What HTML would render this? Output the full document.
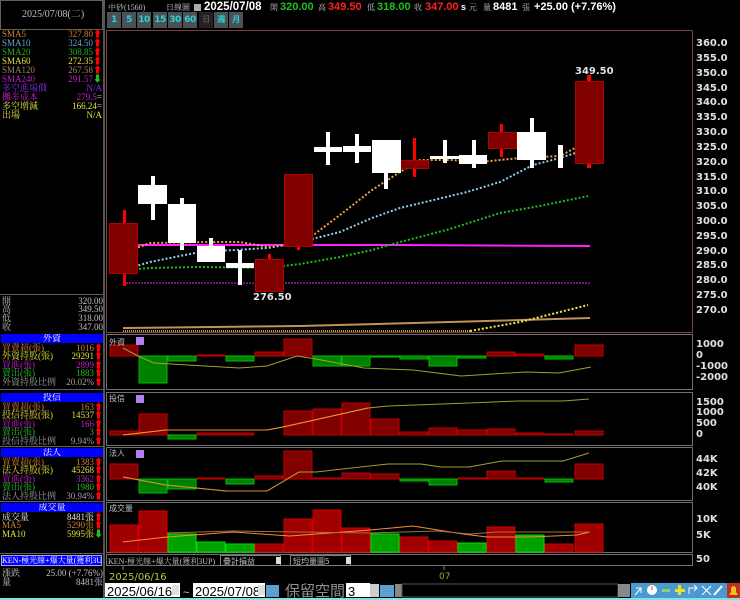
<!DOCTYPE html>
<html><head><meta charset="utf-8">
<style>
html,body{margin:0;padding:0;background:#000;width:740px;height:600px;overflow:hidden;position:relative;font-family:"Liberation Sans","Noto Sans CJK TC",sans-serif;}
.t{position:absolute;white-space:nowrap;font-size:9px;line-height:9px;font-family:"Liberation Serif","Noto Serif CJK SC",serif;}
.r{position:absolute;white-space:nowrap;font-size:9px;line-height:9px;text-align:right;font-family:"Liberation Serif","Noto Serif CJK SC",serif;}
.hd{position:absolute;left:1px;width:102px;height:9px;background:#0000ff;color:#fff;font-size:9px;line-height:9px;text-align:center;font-family:"Liberation Serif","Noto Serif CJK SC",serif;white-space:nowrap;overflow:hidden;}
.ax{position:absolute;left:696px;font:bold 10px "DejaVu Sans",sans-serif;color:#e0e0e0;line-height:10px;}
.btn{position:absolute;top:12px;height:16px;width:14px;background:#4a5258;color:#30d0d0;font:bold 9px "DejaVu Sans",sans-serif;line-height:16px;text-align:center;letter-spacing:-0.5px;overflow:hidden;}
.ar{color:#ff0000;}
.tb{position:absolute;top:1px;white-space:nowrap;font:bold 11px "Liberation Sans",sans-serif;line-height:12px;}
.tl{position:absolute;top:2px;white-space:nowrap;font-size:8px;line-height:11px;color:#c0c0c0;font-family:"Liberation Serif","Noto Serif CJK SC",serif;}
</style></head><body>
<div style="position:absolute;left:0;top:0;width:103px;height:30px;border:1px solid #606060;box-sizing:border-box;"></div>
<div class="t" style="left:22px;top:10px;color:#c0c0c0;font-size:10px;">2025/07/08(二)</div>
<div style="position:absolute;left:103px;top:0;width:2px;height:600px;background:#555;"></div>

<div class="t" style="left:2px;top:30px;color:#d08030">SMA5</div><div class="r" style="right:638px;top:30px;color:#d08030">327.80<span class="ar">⬆</span></div>
<div class="t" style="left:2px;top:39px;color:#60a8d8">SMA10</div><div class="r" style="right:638px;top:39px;color:#60a8d8">324.50<span class="ar">⬆</span></div>
<div class="t" style="left:2px;top:48px;color:#20b020">SMA20</div><div class="r" style="right:638px;top:48px;color:#20b020">308.85<span class="ar">⬆</span></div>
<div class="t" style="left:2px;top:57px;color:#e0e040">SMA60</div><div class="r" style="right:638px;top:57px;color:#e0e040">272.35<span class="ar">⬆</span></div>
<div class="t" style="left:2px;top:66px;color:#a08060">SMA120</div><div class="r" style="right:638px;top:66px;color:#a08060">267.58<span class="ar">⬆</span></div>
<div class="t" style="left:2px;top:75px;color:#c020c0">SMA240</div><div class="r" style="right:638px;top:75px;color:#c020c0">291.57<span style="color:#20c020">⬇</span></div>
<div class="t" style="left:2px;top:84px;color:#8030e0">多空進場價</div><div class="r" style="right:638px;top:84px;color:#8030e0">N/A</div>
<div class="t" style="left:2px;top:93px;color:#c020c0">攤多成本</div><div class="r" style="right:638px;top:93px;color:#c020c0">279.5<span style="color:#ccc">=</span></div>
<div class="t" style="left:2px;top:102px;color:#e0e040">多空增減</div><div class="r" style="right:638px;top:102px;color:#e0e040">166.24<span style="color:#ccc">=</span></div>
<div class="t" style="left:2px;top:111px;color:#e0e040">出場</div><div class="r" style="right:638px;top:111px;color:#e0e040">N/A</div>

<div style="position:absolute;left:0;top:294px;width:103px;height:1px;background:#606060"></div>
<div class="t" style="left:2px;top:297px;color:#c0c0c0">開</div><div class="r" style="right:637px;top:297px;color:#c0c0c0">320.00</div>
<div class="t" style="left:2px;top:305px;color:#c0c0c0">高</div><div class="r" style="right:637px;top:305px;color:#c0c0c0">349.50</div>
<div class="t" style="left:2px;top:314px;color:#c0c0c0">低</div><div class="r" style="right:637px;top:314px;color:#c0c0c0">318.00</div>
<div class="t" style="left:2px;top:323px;color:#c0c0c0">收</div><div class="r" style="right:637px;top:323px;color:#c0c0c0">347.00</div>

<div class="hd" style="top:334px">外資</div>
<div class="t" style="left:2px;top:344px;color:#d08030">買賣超(張)</div><div class="r" style="right:637px;top:344px;color:#d08030">1016<span class="ar">⬆</span></div>
<div class="t" style="left:2px;top:352px;color:#e0e040">外資持股(張)</div><div class="r" style="right:637px;top:352px;color:#e0e040">29291<span class="ar">⬆</span></div>
<div class="t" style="left:2px;top:361px;color:#c020c0">買進(張)</div><div class="r" style="right:637px;top:361px;color:#c020c0">2899<span class="ar">⬆</span></div>
<div class="t" style="left:2px;top:369px;color:#20c020">賣出(張)</div><div class="r" style="right:637px;top:369px;color:#20c020">1883<span class="ar">⬆</span></div>
<div class="t" style="left:2px;top:378px;color:#a0a0a0">外資持股比例</div><div class="r" style="right:637px;top:378px;color:#a0a0a0">20.02%<span class="ar">⬆</span></div>
<div style="position:absolute;left:0;top:389px;width:103px;height:1px;background:#606060"></div>

<div class="hd" style="top:393px">投信</div>
<div class="t" style="left:2px;top:403px;color:#d08030">買賣超(張)</div><div class="r" style="right:637px;top:403px;color:#d08030">163<span class="ar">⬆</span></div>
<div class="t" style="left:2px;top:411px;color:#e0e040">投信持股(張)</div><div class="r" style="right:637px;top:411px;color:#e0e040">14537<span class="ar">⬆</span></div>
<div class="t" style="left:2px;top:420px;color:#c020c0">買進(張)</div><div class="r" style="right:637px;top:420px;color:#c020c0">166<span class="ar">⬆</span></div>
<div class="t" style="left:2px;top:428px;color:#20c020">賣出(張)</div><div class="r" style="right:637px;top:428px;color:#20c020">3<span class="ar">⬆</span></div>
<div class="t" style="left:2px;top:437px;color:#a0a0a0">投信持股比例</div><div class="r" style="right:637px;top:437px;color:#a0a0a0">9.94%<span class="ar">⬆</span></div>
<div style="position:absolute;left:0;top:446px;width:103px;height:1px;background:#606060"></div>

<div class="hd" style="top:448px">法人</div>
<div class="t" style="left:2px;top:458px;color:#d08030">買賣超(張)</div><div class="r" style="right:637px;top:458px;color:#d08030">1383<span class="ar">⬆</span></div>
<div class="t" style="left:2px;top:466px;color:#e0e040">法人持股(張)</div><div class="r" style="right:637px;top:466px;color:#e0e040">45268<span class="ar">⬆</span></div>
<div class="t" style="left:2px;top:475px;color:#c020c0">買進(張)</div><div class="r" style="right:637px;top:475px;color:#c020c0">3362<span class="ar">⬆</span></div>
<div class="t" style="left:2px;top:483px;color:#20c020">賣出(張)</div><div class="r" style="right:637px;top:483px;color:#20c020">1980<span class="ar">⬆</span></div>
<div class="t" style="left:2px;top:492px;color:#a0a0a0">法人持股比例</div><div class="r" style="right:637px;top:492px;color:#a0a0a0">30.94%<span class="ar">⬆</span></div>
<div style="position:absolute;left:0;top:501px;width:103px;height:1px;background:#606060"></div>

<div class="hd" style="top:503px">成交量</div>
<div class="t" style="left:2px;top:513px;color:#e0e0e0">成交量</div><div class="r" style="right:637px;top:513px;color:#e0e0e0">8481張<span class="ar">⬆</span></div>
<div class="t" style="left:2px;top:521px;color:#d08030">MA5</div><div class="r" style="right:637px;top:521px;color:#d08030">5290張<span class="ar">⬆</span></div>
<div class="t" style="left:2px;top:530px;color:#e0e040">MA10</div><div class="r" style="right:637px;top:530px;color:#e0e040">5995張<span style="color:#20c020">⬇</span></div>
<div style="position:absolute;left:0;top:553px;width:103px;height:1px;background:#606060"></div>
<div class="hd" style="top:555px;text-align:left;width:101px;border:1px solid #a0a0ff;box-sizing:border-box;height:11px;font-size:8px;line-height:9px;">KEN-極光線+爆大量(獲利3UP)</div>
<div class="t" style="left:2px;top:569px;color:#c0c0c0">漲跌</div><div class="r" style="right:637px;top:569px;color:#c0c0c0">25.00 (+7.76%)</div>
<div class="t" style="left:2px;top:578px;color:#c0c0c0">量</div><div class="r" style="right:637px;top:578px;color:#c0c0c0">8481張</div>

<!-- top bar -->
<div class="tl" style="left:108px">中砂(1560)</div>
<div class="tl" style="left:166px">日線圖</div>
<div style="position:absolute;left:194px;top:4px;width:7px;height:7px;background:#aaa"></div>
<div class="tb" style="left:204px;color:#fff;font-size:11.5px">2025/07/08</div>
<div class="tl" style="left:270px">開</div><div class="tb" style="left:280px;color:#20c020">320.00</div>
<div class="tl" style="left:318px">高</div><div class="tb" style="left:328px;color:#ff2020">349.50</div>
<div class="tl" style="left:367px">低</div><div class="tb" style="left:377px;color:#20c020">318.00</div>
<div class="tl" style="left:414px">收</div><div class="tb" style="left:425px;color:#ff2020">347.00</div>
<div class="tb" style="left:461px;color:#fff;font-size:9px">s</div><div class="tl" style="left:469px">元</div>
<div class="tl" style="left:483px">量</div><div class="tb" style="left:493px;color:#fff">8481</div>
<div class="tl" style="left:522px">張</div>
<div class="tb" style="left:534px;color:#fff">+25.00 (+7.76%)</div>

<div class="btn" style="left:107px">1</div><div class="btn" style="left:122px">5</div><div class="btn" style="left:137px">10</div><div class="btn" style="left:153px">15</div><div class="btn" style="left:168px">30</div><div class="btn" style="left:183px">60</div>
<div class="btn" style="left:199px;background:#222;color:#555;font-size:8px">日</div><div class="btn" style="left:214px;font-size:8px">週</div><div class="btn" style="left:229px;font-size:8px">月</div>

<!-- axis labels -->
<div class="ax" style="top:39px">360.0</div><div class="ax" style="top:54px">355.0</div><div class="ax" style="top:69px">350.0</div><div class="ax" style="top:84px">345.0</div><div class="ax" style="top:98px">340.0</div><div class="ax" style="top:113px">335.0</div><div class="ax" style="top:128px">330.0</div><div class="ax" style="top:143px">325.0</div><div class="ax" style="top:158px">320.0</div><div class="ax" style="top:173px">315.0</div><div class="ax" style="top:187px">310.0</div><div class="ax" style="top:202px">305.0</div><div class="ax" style="top:217px">300.0</div><div class="ax" style="top:232px">295.0</div><div class="ax" style="top:247px">290.0</div><div class="ax" style="top:261px">285.0</div><div class="ax" style="top:276px">280.0</div><div class="ax" style="top:291px">275.0</div><div class="ax" style="top:306px">270.0</div>
<div class="ax" style="top:340px">1000</div><div class="ax" style="top:351px">0</div><div class="ax" style="top:362px">-1000</div><div class="ax" style="top:373px">-2000</div>
<div class="ax" style="top:398px">1500</div><div class="ax" style="top:408px">1000</div><div class="ax" style="top:419px">500</div><div class="ax" style="top:430px">0</div>
<div class="ax" style="top:455px">44K</div><div class="ax" style="top:469px">42K</div><div class="ax" style="top:483px">40K</div>
<div class="ax" style="top:515px">10K</div><div class="ax" style="top:531px">5K</div><div class="ax" style="top:555px">50</div>

<svg width="740" height="600" style="position:absolute;left:0;top:0" xmlns="http://www.w3.org/2000/svg">
<g fill="none" stroke-width="1">
<rect x="106.5" y="30.5" width="586" height="302" stroke="#804040"/>
<rect x="106.5" y="334.5" width="586" height="55" stroke="#707070"/>
<rect x="106.5" y="392.5" width="586" height="53" stroke="#707070"/>
<rect x="106.5" y="447.5" width="586" height="53" stroke="#707070"/>
<rect x="106.5" y="502.5" width="586" height="50" stroke="#707070"/>
<rect x="106.5" y="554.5" width="586" height="11" stroke="#707070"/>
</g>
<polyline points="123,328 300,326 450,322 590,318" stroke="#c09060" stroke-width="2" fill="none"/>
<line x1="123" y1="331" x2="470" y2="331" stroke="#c0a040" stroke-width="2" stroke-dasharray="1,1"/>
<polyline points="470,331 520,322 588,305" stroke="#f0f040" stroke-width="2" stroke-dasharray="2,2" fill="none"/>
<line x1="123" y1="283" x2="590" y2="283" stroke="#9020a0" stroke-width="1.5" stroke-dasharray="2,1"/>
<polyline points="123,245 400,245 590,246" stroke="#ff20ff" stroke-width="2" fill="none"/>
<polyline points="123,270 150,268 200,267 268,268 300,264 340,257 372,250 400,242 450,229 500,213 540,206 588,196" stroke="#20c020" stroke-width="2" stroke-dasharray="2,2" fill="none"/>
<polyline points="123,270 150,262 200,252 268,248 300,242 340,232 372,218 400,208 467,192 500,182 533,165 560,158 588,149" stroke="#90d0f0" stroke-width="2" stroke-dasharray="2,2" fill="none"/>
<polyline points="123,253 150,243 210,242 240,242 268,247 290,245 312,236 340,215 372,190 400,172 420,160 450,160 480,162 520,158 560,156 575,148 590,140" stroke="#f0a040" stroke-width="2" stroke-dasharray="2,2" fill="none"/>
<g fill="#ff0000">
<rect x="123" y="210" width="3" height="76"/><rect x="268" y="254" width="3" height="38"/><rect x="297" y="240" width="3" height="10"/>
<rect x="413" y="138" width="3" height="39"/><rect x="500" y="124" width="3" height="33"/><rect x="587" y="75" width="4" height="93"/>
</g>
<g fill="#800000" stroke="#b00000">
<rect x="109.5" y="223.5" width="28" height="50"/>
<rect x="255.5" y="259.5" width="28" height="32"/>
<rect x="284.5" y="174.5" width="28" height="72"/>
<rect x="400.5" y="160.5" width="28" height="8"/>
<rect x="488.5" y="132.5" width="28" height="16"/>
<rect x="575.5" y="81.5" width="28" height="82"/>
</g>
<g fill="#ffffff">
<rect x="151" y="176" width="4" height="44"/><rect x="138" y="185" width="29" height="19"/>
<rect x="180" y="198" width="4" height="52"/><rect x="168" y="204" width="28" height="39"/>
<rect x="209" y="238" width="4" height="10"/><rect x="197" y="246" width="28" height="16"/>
<rect x="238" y="250" width="4" height="35"/><rect x="226" y="263" width="28" height="5"/>
<rect x="326" y="132" width="4" height="33"/><rect x="314" y="147" width="28" height="5"/>
<rect x="355" y="134" width="4" height="29"/><rect x="343" y="146" width="28" height="6"/>
<rect x="384" y="150" width="4" height="39"/><rect x="372" y="140" width="29" height="33"/>
<rect x="443" y="140" width="4" height="23"/><rect x="430" y="156" width="29" height="3"/>
<rect x="472" y="140" width="4" height="28"/><rect x="459" y="155" width="28" height="9"/>
<rect x="530" y="118" width="4" height="50"/><rect x="517" y="132" width="29" height="28"/>
<rect x="558" y="145" width="5" height="23"/>
</g>
<text x="253" y="300" fill="#e0e0e0" font-family="DejaVu Sans" font-weight="bold" font-size="10">276.50</text>
<text x="575" y="74" fill="#e0e0e0" font-family="DejaVu Sans" font-weight="bold" font-size="10">349.50</text>

<g fill="#800000" stroke="#c00000">
<rect x="110" y="345" width="28" height="11"/><rect x="197" y="355" width="28" height="1"/><rect x="255" y="352" width="28" height="4"/><rect x="284" y="339" width="28" height="17"/><rect x="487" y="352" width="28" height="4"/><rect x="516" y="354" width="28" height="2"/><rect x="575" y="345" width="28" height="11"/>
</g>
<g fill="#008000" stroke="#00c000">
<rect x="139" y="356" width="28" height="27"/><rect x="168" y="356" width="28" height="5"/><rect x="226" y="356" width="28" height="5"/><rect x="313" y="356" width="28" height="10"/><rect x="342" y="356" width="28" height="10"/><rect x="371" y="356" width="28" height="1"/><rect x="400" y="356" width="28" height="3"/><rect x="429" y="356" width="28" height="10"/><rect x="458" y="356" width="28" height="2"/><rect x="545" y="356" width="28" height="3"/>
</g>
<polyline points="123,348 138,356 154,363 239,368 267,366 297,356 316,359 364,368 413,370 445,374 461,376 526,372 559,373 591,367" stroke="#a0a030" fill="none"/>
<g fill="#800000" stroke="#c00000">
<rect x="110" y="431" width="28" height="4"/><rect x="139" y="414" width="28" height="21"/><rect x="197" y="433" width="28" height="2"/><rect x="226" y="433" width="28" height="2"/><rect x="284" y="411" width="28" height="24"/><rect x="313" y="409" width="28" height="26"/><rect x="342" y="403" width="28" height="32"/><rect x="371" y="419" width="28" height="16"/><rect x="400" y="432" width="28" height="3"/><rect x="429" y="428" width="28" height="7"/><rect x="458" y="430" width="28" height="5"/><rect x="487" y="429" width="28" height="6"/><rect x="516" y="433" width="28" height="2"/><rect x="545" y="434" width="28" height="1"/><rect x="575" y="431" width="28" height="4"/>
</g>
<rect x="168" y="435" width="28" height="4" fill="#008000" stroke="#00c000"/>
<polyline points="123,435 166,430 267,430 283,427 368,408 388,406 469,403 518,401 563,401 589,399" stroke="#a0a030" fill="none"/>
<polyline points="123,435 166,430 267,430 283,427 368,408" stroke="#f09030" fill="none"/>
<g fill="#800000" stroke="#c00000">
<rect x="110" y="464" width="28" height="15"/><rect x="197" y="478" width="28" height="1"/><rect x="255" y="476" width="28" height="3"/><rect x="284" y="451" width="28" height="28"/><rect x="313" y="478" width="28" height="1"/><rect x="342" y="473" width="28" height="6"/><rect x="371" y="474" width="28" height="5"/><rect x="458" y="478" width="28" height="1"/><rect x="487" y="471" width="28" height="8"/><rect x="516" y="478" width="28" height="1"/><rect x="575" y="464" width="28" height="15"/>
</g>
<g fill="#008000" stroke="#00c000">
<rect x="139" y="479" width="28" height="14"/><rect x="168" y="479" width="28" height="10"/><rect x="226" y="479" width="28" height="5"/><rect x="400" y="479" width="28" height="2"/><rect x="429" y="479" width="28" height="6"/><rect x="545" y="479" width="28" height="3"/>
</g>
<polyline points="123,477 166,485 206,489 226,491 267,491 299,472 316,472 388,464 421,464 441,467 469,467 502,461 563,461 589,453" stroke="#a0a030" fill="none"/>
<polyline points="123,477 166,485 206,489 226,491 267,491 299,472" stroke="#d09030" fill="none"/>
<g fill="#a00000" stroke="#d00000">
<rect x="110" y="525" width="28" height="27"/><rect x="139" y="511" width="28" height="41"/><rect x="255" y="544" width="28" height="8"/><rect x="284" y="519" width="28" height="33"/><rect x="313" y="510" width="28" height="42"/><rect x="342" y="528" width="28" height="24"/><rect x="400" y="537" width="28" height="15"/><rect x="429" y="541" width="28" height="11"/><rect x="487" y="527" width="28" height="25"/><rect x="545" y="544" width="28" height="8"/><rect x="575" y="524" width="28" height="28"/>
</g>
<g fill="#00a000" stroke="#00e000">
<rect x="168" y="534" width="28" height="18"/><rect x="197" y="542" width="28" height="10"/><rect x="226" y="544" width="28" height="8"/><rect x="371" y="534" width="28" height="18"/><rect x="458" y="543" width="28" height="9"/><rect x="516" y="535" width="28" height="17"/>
</g>
<polyline points="123,542 167,537 233,532 290,536 370,530 413,526 463,534 487,537 530,537 577,535 590,532" stroke="#f09030" fill="none"/>
<polyline points="167,533 233,531 300,532 370,533 437,531 470,534 497,532 590,532" stroke="#a07040" fill="none"/>
<rect x="136" y="337" width="8" height="8" fill="#b080f0"/><rect x="136" y="395" width="8" height="8" fill="#b080f0"/><rect x="136" y="450" width="8" height="8" fill="#b080f0"/>
<text x="109" y="345" fill="#c0c0c0" font-size="8" font-family="Noto Sans CJK TC">外資</text>
<text x="109" y="401" fill="#c0c0c0" font-size="8" font-family="Noto Sans CJK TC">投信</text>
<text x="109" y="456" fill="#c0c0c0" font-size="8" font-family="Noto Sans CJK TC">法人</text>
<text x="109" y="511" fill="#c0c0c0" font-size="8" font-family="Noto Sans CJK TC">成交量</text>
<text x="108" y="564" fill="#c0c0c0" font-size="8" font-family="Liberation Serif,Noto Serif CJK SC">KEN-極光線+爆大量(獲利3UP)</text>
<rect x="220.5" y="555.5" width="60" height="10" fill="#000" stroke="#808080"/>
<text x="223" y="564" fill="#c0c0c0" font-size="8" font-family="Noto Sans CJK TC">疊計損益</text>
<rect x="276" y="557" width="5" height="7" fill="#ddd"/>
<rect x="290.5" y="555.5" width="60" height="10" fill="#000" stroke="#808080"/>
<text x="293" y="564" fill="#c0c0c0" font-size="8" font-family="Noto Sans CJK TC">短均量圖5</text>
<rect x="346" y="557" width="5" height="7" fill="#ddd"/>
<line x1="123" y1="566" x2="123" y2="570" stroke="#808080"/>
<line x1="444" y1="566" x2="444" y2="570" stroke="#808080"/>
<text x="109" y="580" fill="#c0c040" font-size="10" font-family="DejaVu Sans">2025/06/16</text>
<text x="439" y="579" fill="#a0a030" font-size="9" font-family="DejaVu Sans">07</text>
<rect x="105" y="583" width="75" height="14" fill="#fff"/>
<text x="107" y="596" fill="#000" font-size="13" font-family="Liberation Sans">2025/06/16</text>
<rect x="172" y="585" width="7" height="10" fill="#ddd"/>
<text x="183" y="596" fill="#ccc" font-size="11">~</text>
<rect x="193" y="583" width="72" height="14" fill="#fff"/>
<text x="195" y="596" fill="#000" font-size="13" font-family="Liberation Sans">2025/07/08</text>
<rect x="258" y="585" width="7" height="10" fill="#ddd"/>
<rect x="266" y="585" width="13" height="12" fill="#5aa0d0"/>
<text x="285" y="596" fill="#909090" font-size="15" font-family="Noto Sans CJK TC">保留空間</text>
<rect x="346" y="583" width="24" height="14" fill="#fff"/>
<text x="348" y="596" fill="#000" font-size="13">3</text>
<rect x="370" y="584" width="9" height="13" fill="#ccc"/>
<rect x="380" y="585" width="14" height="12" fill="#5aa0d0"/>
<rect x="395" y="584" width="7" height="13" fill="#888"/>
<rect x="402" y="584" width="216" height="13" fill="#000" stroke="#555"/>
<rect x="618" y="584" width="12" height="13" fill="#888"/>
<rect x="631" y="583" width="97" height="15" fill="#4a9ad0"/>
<circle cx="652" cy="590" r="5" fill="#fff"/><line x1="652" y1="590" x2="652" y2="586" stroke="#e06000"/>
<rect x="662" y="589" width="8" height="3" fill="#90d070"/>
<rect x="675" y="589" width="10" height="3" fill="#f0e020"/><rect x="678" y="585" width="3" height="10" fill="#f0e020"/>
<path d="M635 595 L641 588 M636 588 L641 588 L641 593" stroke="#fff" fill="none"/>
<path d="M689 594 L689 588 L697 588 M694 585 L697 588 L694 591" stroke="#fff" fill="none"/>
<path d="M702 586 L711 595 M711 586 L702 595" stroke="#fff" fill="none"/>
<path d="M714 595 L722 586" stroke="#fff" stroke-width="2" fill="none"/>
<rect x="727" y="583" width="13" height="15" fill="#c03020"/>
<path d="M729 595 L738 595 L736 592 L736 588 Q733.5 584 731 588 L731 592 Z" fill="#f0c020"/>
<rect x="0" y="598" width="740" height="2" fill="#80e0f0"/>
</svg>
</body></html>
